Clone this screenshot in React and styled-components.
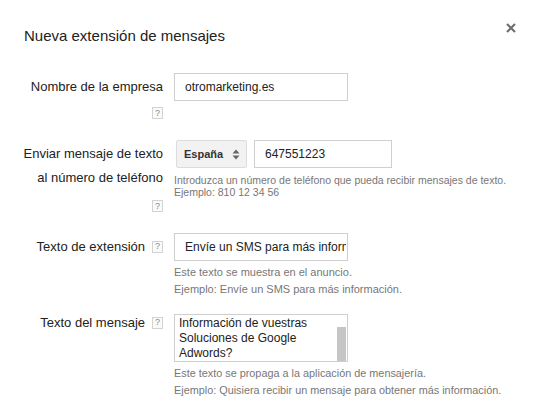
import React, { useEffect, useRef } from 'react'
import styled, { createGlobalStyle } from 'styled-components'

const Global = createGlobalStyle`
  html, body {
    margin: 0;
    padding: 0;
    background: #ffffff;
  }
  body {
    font-family: "Liberation Sans", Arial, Helvetica, sans-serif;
    color: #222222;
  }
`

const Dialog = styled.div`
  width: 545px;
  height: 417px;
  background: #ffffff;
  overflow: hidden;
`

const Header = styled.div`
  display: flex;
  justify-content: space-between;
  align-items: flex-start;
  padding: 26px 29px 0 24px;
`

const Title = styled.h1`
  margin: 0;
  font-size: 15px;
  line-height: 20px;
  font-weight: normal;
  color: #222222;
`

const Close = styled.button`
  display: flex;
  width: 10px;
  height: 10px;
  margin-top: -3px;
  padding: 0;
  border: 0;
  background: none;
  cursor: pointer;
`

const Form = styled.div`
  display: flex;
  flex-direction: column;
  margin-top: 27px;
`

const Row = styled.div`
  display: grid;
  grid-template-columns: 163px 1fr;
  column-gap: 11px;
  margin-bottom: ${p => p.$space || 0}px;
`

const LabelCell = styled.div`
  display: flex;
  flex-direction: column;
  align-items: flex-end;
  text-align: right;
`

const Label = styled.div`
  font-size: 13px;
  line-height: ${p => p.$lh || 18}px;
  padding-top: ${p => p.$pad || 0}px;
  color: #222222;
  white-space: nowrap;
`

const Help = styled.span`
  display: inline-flex;
  align-items: center;
  justify-content: center;
  box-sizing: border-box;
  width: 11px;
  height: 12px;
  border: 1px solid #d3d3d3;
  background: #fafafa;
  color: #8a8a8a;
  font-size: 9px;
  line-height: 1;
  margin-top: ${p => p.$below || 0}px;
  margin-left: ${p => (p.$inline ? 7 : 0)}px;
  vertical-align: ${p => (p.$inline ? '1px' : 'baseline')};
  position: relative;
  top: ${p => (p.$inline ? -1 : 0)}px;
`

const Field = styled.div`
  display: flex;
  flex-direction: column;
  align-items: flex-start;
`

const Controls = styled.div`
  display: flex;
  gap: 7px;
  margin-left: 2px;
`

const TextInput = styled.input`
  box-sizing: border-box;
  width: ${p => p.$w || 174}px;
  height: 28px;
  border: 1px solid #cfcfcf;
  border-radius: 0;
  padding: 0 1px 0 10px;
  font-family: inherit;
  font-size: 12px;
  color: #222222;
  background: #ffffff;
  outline: none;
`

const Select = styled.div`
  box-sizing: border-box;
  display: flex;
  align-items: center;
  justify-content: space-between;
  width: 71px;
  height: 28px;
  padding: 0 6px 0 7px;
  border: 1px solid #dcdcdc;
  border-radius: 2px;
  background: #f2f2f2;
  font-size: 11px;
  font-weight: bold;
  color: #333333;
`

const MessageBox = styled.div`
  box-sizing: border-box;
  display: flex;
  width: 174px;
  height: 48px;
  border: 1px solid #cfcfcf;
  background: #ffffff;
`

const TextArea = styled.textarea`
  flex: 1;
  min-width: 0;
  box-sizing: border-box;
  height: 100%;
  padding: 2px 0 0 4px;
  margin: 0;
  border: 0;
  font-family: inherit;
  font-size: 12px;
  line-height: 15px;
  color: #222222;
  resize: none;
  outline: none;
  overflow: hidden;
  display: block;
`

const ScrollTrack = styled.div`
  display: flex;
  flex-direction: column;
  justify-content: flex-end;
  width: 10px;
  padding: 0 1px 0 0;
  box-sizing: border-box;
`

const ScrollThumb = styled.div`
  height: 34px;
  background: #c6c6c6;
`

const Hint = styled.div`
  margin-top: ${p => p.$top || 0}px;
  font-size: ${p => p.$size || 11}px;
  line-height: ${p => p.$lh || 12}px;
  color: #777777;
  white-space: nowrap;

  & p {
    margin: 0;
  }
  & p + p {
    margin-top: ${p => p.$pgap || 0}px;
  }
`

function Arrows() {
  return (
    <svg width="8" height="11" viewBox="0 0 8 11">
      <path d="M4 0.5 L7.5 4.5 H0.5 Z" fill="#666" />
      <path d="M4 10.5 L7.5 6.5 H0.5 Z" fill="#666" />
    </svg>
  )
}

export default function App() {
  const msgRef = useRef(null)

  useEffect(() => {
    if (msgRef.current) msgRef.current.scrollTop = 9999
  }, [])

  return (
    <>
      <Global />
      <Dialog>
        <Header>
          <Title>Nueva extensión de mensajes</Title>
          <Close aria-label="Cerrar">
            <svg width="10" height="10" viewBox="0 0 10 10">
              <path d="M1 1 L9 9 M9 1 L1 9" stroke="#6f6f6f" strokeWidth="2.2" />
            </svg>
          </Close>
        </Header>

        <Form>
          <Row $space={21}>
            <LabelCell>
              <Label $pad={5}>Nombre de la empresa</Label>
              <Help $below={11}>?</Help>
            </LabelCell>
            <Field>
              <TextInput readOnly defaultValue="otromarketing.es" />
            </Field>
          </Row>

          <Row $space={21}>
            <LabelCell>
              <Label $pad={2} $lh={24}>
                Enviar mensaje de texto
                <br />
                al número de teléfono
              </Label>
              <Help $below={10}>?</Help>
            </LabelCell>
            <Field>
              <Controls>
                <Select>
                  <span>España</span>
                  <Arrows />
                </Select>
                <TextInput $w={138} readOnly defaultValue="647551223" />
              </Controls>
              <Hint $top={6} $size={10.5}>
                Introduzca un número de teléfono que pueda recibir mensajes de texto.
                <br />
                Ejemplo: 810 12 34 56
              </Hint>
            </Field>
          </Row>

          <Row $space={18}>
            <LabelCell>
              <Label $pad={5}>
                Texto de extensión
                <Help $inline>?</Help>
              </Label>
            </LabelCell>
            <Field>
              <TextInput readOnly defaultValue="Envíe un SMS para más información." />
              <Hint $top={4} $lh={14} $pgap={3}>
                <p>Este texto se muestra en el anuncio.</p>
                <p>Ejemplo: Envíe un SMS para más información.</p>
              </Hint>
            </Field>
          </Row>

          <Row>
            <LabelCell>
              <Label>
                Texto del mensaje
                <Help $inline>?</Help>
              </Label>
            </LabelCell>
            <Field>
              <MessageBox>
                <TextArea
                  ref={msgRef}
                  readOnly
                  defaultValue={'¿Podrían enviarme más\nInformación de vuestras\nSoluciones de Google\nAdwords?'}
                />
                <ScrollTrack>
                  <ScrollThumb />
                </ScrollTrack>
              </MessageBox>
              <Hint $top={4} $lh={14} $pgap={3} $size={10.85}>
                <p>Este texto se propaga a la aplicación de mensajería.</p>
                <p>Ejemplo: Quisiera recibir un mensaje para obtener más información.</p>
              </Hint>
            </Field>
          </Row>
        </Form>
      </Dialog>
    </>
  )
}
